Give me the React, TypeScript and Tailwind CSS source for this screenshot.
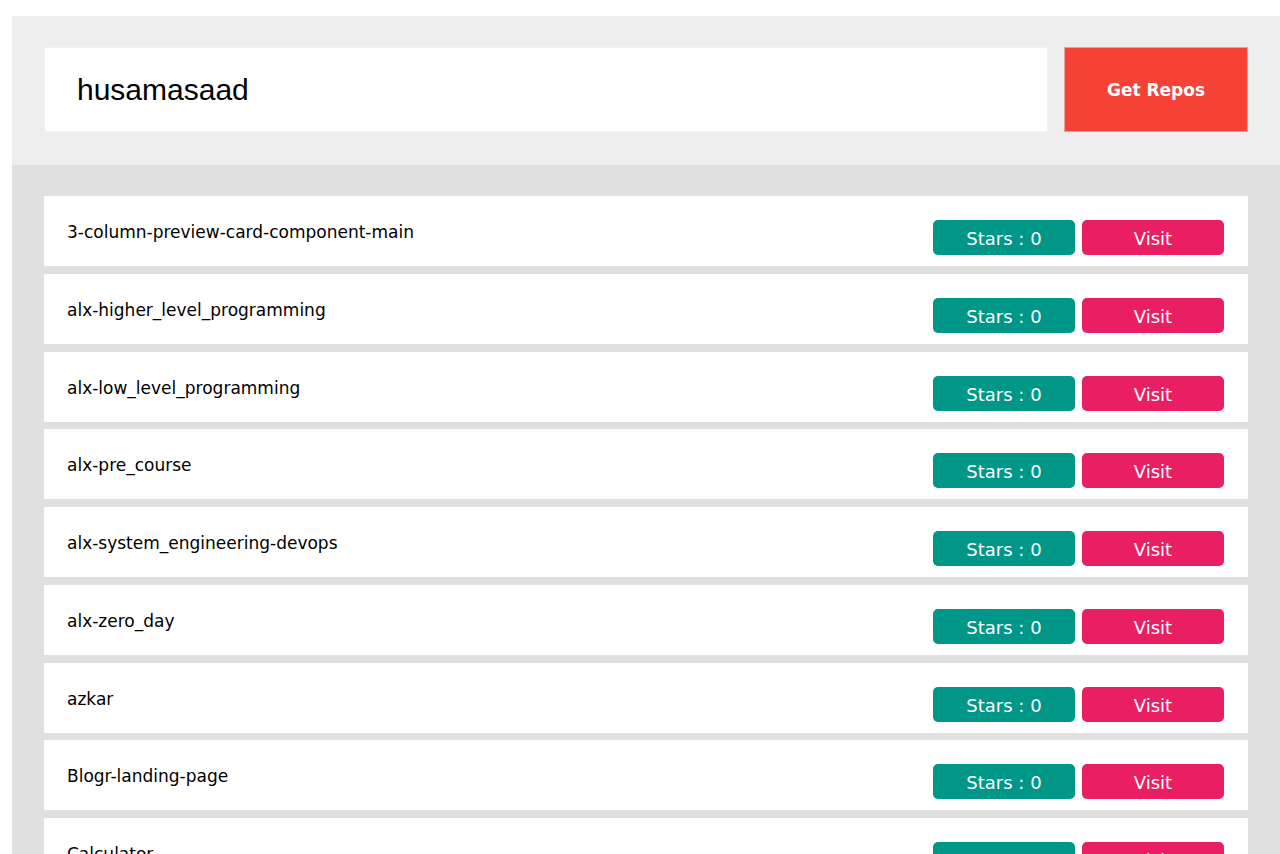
import React from "react";

const repos = [
  "3-column-preview-card-component-main",
  "alx-higher_level_programming",
  "alx-low_level_programming",
  "alx-pre_course",
  "alx-system_engineering-devops",
  "alx-zero_day",
  "azkar",
  "Blogr-landing-page",
  "Calculator",
  "Clock",
];

export default function App() {
  return (
    <div className="h-[854px] bg-white pt-4 pl-3 overflow-hidden" style={{ fontFamily: '"DejaVu Sans", Verdana, sans-serif' }}>
      <div className="w-[1268px]">
        <div className="bg-[#eeeeee] px-8 pt-[31px] pb-[33px] flex gap-4 h-[149px]">
          <div className="flex-1 h-[85px] bg-white border border-[#f3f3f3] flex items-center pl-8">
            <span className="text-[30px] text-black leading-[34px] pt-[1px]" style={{ fontFamily: '"Liberation Sans", Arial, sans-serif' }}>husamasaad</span>
          </div>
          <button className="w-[184px] h-[85px] bg-[#f44336] border border-[#f29b93] text-white font-bold text-[17px] pt-[3px]">
            Get Repos
          </button>
        </div>
        <div className="bg-[#e0e0e0] px-8 pt-[31px] flex flex-col gap-[7.75px] pb-8">
          {repos.map((r) => (
            <div key={r} className="h-[70px] shrink-0 bg-white flex items-start justify-between pl-[23px] pr-6 pt-6">
              <span className="text-[17px] leading-[20px] text-black mt-[2px]">{r}</span>
              <div className="flex gap-[7px]">
                <span className="w-[142px] h-[35px] rounded-[5px] bg-[#009688] text-white text-[18px] leading-[22px] pt-[3px] flex items-center justify-center">
                  Stars : 0
                </span>
                <span className="w-[142px] h-[35px] rounded-[5px] bg-[#e91e63] text-white text-[18px] leading-[22px] pt-[3px] flex items-center justify-center">
                  Visit
                </span>
              </div>
            </div>
          ))}
        </div>
      </div>
    </div>
  );
}
